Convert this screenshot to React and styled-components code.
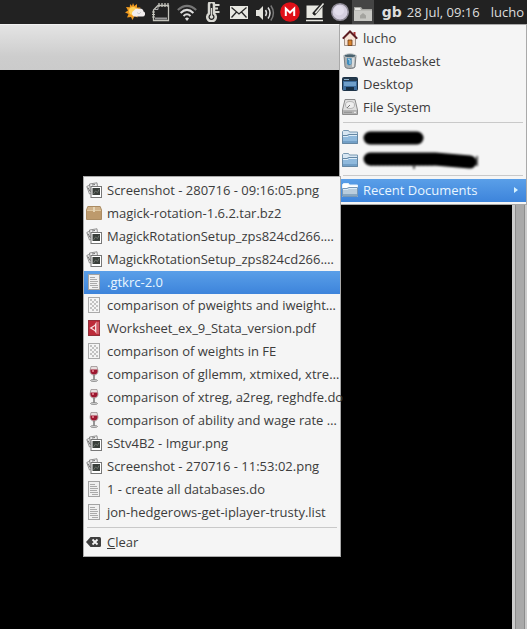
import styled, { createGlobalStyle } from "styled-components";

const theme = {
  font: `"Open Sans", "Noto Sans", sans-serif`,
  panel: "#222222",
  panelText: "#dedede",
  menu: "#f5f5f5",
  menuText: "#3c3c3c",
  border: "#a9a9a9",
  line: "#c9c9c9",
  select: "linear-gradient(#5a9fe8, #3d84db)",
};

const places = [
  { icon: <HomeIcon />, label: "lucho" },
  { icon: <TrashIcon />, label: "Wastebasket" },
  { icon: <DesktopIcon />, label: "Desktop" },
  { icon: <DriveIcon />, label: "File System" },
];

const documents = [
  { icon: <ImageIcon />, label: "Screenshot - 280716 - 09:16:05.png" },
  { icon: <PackageIcon />, label: "magick-rotation-1.6.2.tar.bz2" },
  { icon: <ImageIcon />, label: "MagickRotationSetup_zps824cd266.…" },
  { icon: <ImageIcon />, label: "MagickRotationSetup_zps824cd266.…" },
  { icon: <TextIcon />, label: ".gtkrc-2.0", active: true },
  { icon: <UnknownIcon />, label: "comparison of pweights and iweight…" },
  { icon: <PdfIcon />, label: "Worksheet_ex_9_Stata_version.pdf" },
  { icon: <UnknownIcon />, label: "comparison of weights in FE" },
  { icon: <WineIcon />, label: "comparison of gllemm, xtmixed, xtre…" },
  { icon: <WineIcon />, label: "comparison of xtreg, a2reg, reghdfe.do" },
  { icon: <WineIcon />, label: "comparison of ability and wage rate …" },
  { icon: <ImageIcon />, label: "sStv4B2 - Imgur.png" },
  { icon: <ImageIcon />, label: "Screenshot - 270716 - 11:53:02.png" },
  { icon: <TextIcon />, label: "1 - create all databases.do" },
  { icon: <TextIcon />, label: "jon-hedgerows-get-iplayer-trusty.list" },
];

const indicators = [
  { name: "Weather", icon: <WeatherIcon />, width: 26 },
  { name: "Notes", icon: <NotesIcon />, width: 26 },
  { name: "Network", icon: <WifiIcon />, width: 26 },
  { name: "Sensors", icon: <ThermometerIcon />, width: 26 },
  { name: "Mail", icon: <MailIcon />, width: 26 },
  { name: "Volume", icon: <VolumeIcon />, width: 26 },
  { name: "Mega", icon: <MegaIcon />, width: 24 },
  { name: "Editor", icon: <EditIcon />, width: 26 },
  { name: "Status", icon: <OrbIcon />, width: 24 },
];

export default function App() {
  return (
    <Desktop>
      <GlobalStyle />
      <Panel>
        {indicators.map((item) => (
          <Indicator key={item.name} aria-label={item.name} $width={item.width}>
            {item.icon}
          </Indicator>
        ))}
        <Indicator aria-label="Places" aria-expanded="true" $width={22} $open>
          <PanelFolderIcon />
        </Indicator>
        <Layout>gb</Layout>
        <Clock>28 Jul, 09:16</Clock>
        <User>lucho</User>
        <PlacesMenu />
      </Panel>
      <TitleBar />
      <Content>
        <ScrollTrack>
          <ScrollThumb />
        </ScrollTrack>
      </Content>
    </Desktop>
  );
}

function PlacesMenu() {
  return (
    <MainMenu>
      {places.map((p) => (
        <MenuItem key={p.label} icon={p.icon} label={p.label} />
      ))}
      <Separator />
      <li>
        <ItemButton aria-label="Bookmark 1">
          <FolderIcon />
          <ShortScribble />
        </ItemButton>
      </li>
      <li>
        <ItemButton aria-label="Bookmark 2">
          <FolderIcon />
          <LongScribble />
        </ItemButton>
      </li>
      <Separator />
      <SubmenuHolder>
        <ItemButton $active aria-expanded="true">
          <FolderIcon light />
          <Label>Recent Documents</Label>
          <Arrow viewBox="0 0 4 6">
            <path d="M0 0L4 3L0 6Z" fill="#d5f2ff" />
          </Arrow>
        </ItemButton>
        <RecentMenu>
          {documents.map((d, i) => (
            <MenuItem key={i} icon={d.icon} label={d.label} active={d.active} />
          ))}
          <Separator />
          <li>
            <ItemButton>
              <ClearIcon />
              <Label>
                <u>C</u>lear
              </Label>
            </ItemButton>
          </li>
        </RecentMenu>
      </SubmenuHolder>
    </MainMenu>
  );
}

function MenuItem({ icon, label, active }) {
  return (
    <li>
      <ItemButton $active={active}>
        {icon}
        <Label>{label}</Label>
      </ItemButton>
    </li>
  );
}

/* bookmarks with their names inked over */

function ShortScribble() {
  return (
    <Ink width="120" height="22" viewBox="0 0 120 22">
      <path d="M7 12H54" stroke="#000" strokeWidth="13" strokeLinecap="round" />
    </Ink>
  );
}

function LongScribble() {
  return (
    <Ink width="120" height="22" viewBox="0 0 120 22">
      <path d="M7 10H72L107 13" stroke="#000" strokeWidth="13" strokeLinecap="round" strokeLinejoin="round" fill="none" />
      <path d="M7 15H72" stroke="#000" strokeWidth="3" strokeDasharray="3 1" />
      <path d="M51 15v5M114 7v10" stroke="#222" strokeWidth="1.500" />
    </Ink>
  );
}

/* menu icons */

function HomeIcon() {
  return (
    <Icon viewBox="0 0 16 16">
      <path d="M11.500 2h2v4h-2z" fill="#a33" />
      <path d="M2.500 8L8 2.500L13.500 8V15.500H2.500Z" fill="#f6e3d6" stroke="#8b7b70" strokeWidth=".8" />
      <path d="M.8 8.600L8 1.400L15.200 8.600" fill="none" stroke="#5c1a20" strokeWidth="2" />
      <path d="M6 15.500V10h4v5.500Z" fill="#d98531" stroke="#6b3c1a" strokeWidth=".8" />
    </Icon>
  );
}

function TrashIcon() {
  return (
    <Icon viewBox="0 0 16 16">
      <path d="M2 2.500L3 14C4 16 12 16 13 14L14 2.500Z" fill="#a9afb2" stroke="#666b6e" strokeWidth=".8" />
      <path d="M10 5h2.500l-.6 9H10Z" fill="#d9dcdd" />
      <path d="M5 5h4.500v6L7 12.500L5 11Z" fill="#3e8cbd" />
      <path d="M6 6l2 1v4" stroke="#b7def0" fill="none" />
      <ellipse cx="8" cy="2.800" rx="6" ry="2" fill="#49616e" stroke="#c3c8ca" />
    </Icon>
  );
}

function DesktopIcon() {
  return (
    <Icon viewBox="0 0 16 16">
      <rect x=".5" y="1.500" width="15" height="13" rx="1" fill="#3d6c9c" stroke="#1e3347" />
      <path d="M1 2h14v3H1z" fill="#24394c" />
      <path d="M2 6h12v4H2z" fill="#6f9fca" />
      <path d="M4 11h8v3H4z" fill="#172f45" />
      <path d="M2 3.500h5" stroke="#8db2cf" />
    </Icon>
  );
}

function DriveIcon() {
  return (
    <Icon viewBox="0 0 16 16">
      <path d="M3 .5h10L15.500 11v4.500H.5V11Z" fill="#dedede" stroke="#8c8c8c" />
      <path d="M1 11h14v4H1z" fill="#b4b4b4" />
      <ellipse cx="8" cy="6" rx="4.500" ry="3.500" fill="#eee" stroke="#aaa" strokeWidth=".8" />
      <path d="M5 9l3-3" stroke="#777" />
      <path d="M2.500 13.300h7" stroke="#6c6c6c" strokeDasharray="1 1" />
      <path d="M12 13.300h2" stroke="#f5f5f5" />
    </Icon>
  );
}

function FolderIcon({ light }) {
  return (
    <Icon viewBox="0 0 16 16">
      <path d="M.5 14.500V2.500L1.500 1.500H6.500L7.500 3H15.500V14.500Z" fill={light ? "#fff" : "#d7e6f2"} stroke={light ? "#e4f1fb" : "#7898b1"} />
      <path d="M.5 14.500V6.500H5L6.500 5.500H15.500V14.500Z" fill={light ? "#b9cddd" : "#8fb9dc"} stroke={light ? "#7798b7" : "#6587a3"} />
      <path d="M1 7.500h5l1-1h8" stroke="#dcecf8" fill="none" />
      <path d="M1 12h14v2H1z" fill={light ? "#87a7c2" : "#729fc6"} />
    </Icon>
  );
}

function ImageIcon() {
  return (
    <Icon viewBox="0 0 16 16">
      <path d="M.8 4.500L5 2.500L7 11L3.500 12Z" fill="#f6f6f6" stroke="#777" strokeWidth=".8" />
      <path d="M3.500 2L11 .8L12 9L4.500 10Z" fill="#eee" stroke="#777" strokeWidth=".8" />
      <path d="M2 5.500l2 4M6 3l3-.5" stroke="#777" />
      <rect x="5" y="4.500" width="10.500" height="11" fill="#fff" stroke="#777" />
      <rect x="6.500" y="6" width="7.500" height="7" fill="#3a3f3b" />
      <path d="M7.500 12l2-3l2 1.500l1.500-3" stroke="#6a716b" fill="none" />
    </Icon>
  );
}

function PackageIcon() {
  return (
    <Icon viewBox="0 0 16 16">
      <path d="M1.800 1.500H14.200L15.500 5V14.500H.5V5Z" fill="#d0b28a" stroke="#ab8c62" />
      <path d="M1 6h14v8H1z" fill="#bd9a6c" />
      <path d="M1 5.500h14" stroke="#dec69f" />
      <path d="M7 2h2v5h-2z" fill="#e4d3b3" />
    </Icon>
  );
}

function TextIcon() {
  return (
    <Icon viewBox="0 0 16 16">
      <rect x="2.500" y=".5" width="11" height="15" fill="#f0f0f0" stroke="#a3a3a3" />
      <path d="M4 3.500h5M4 5.500h7M4 7.500h8M4 9.500h7M4 11.500h8M6 13.500h6" stroke="#aaa" />
    </Icon>
  );
}

function UnknownIcon() {
  return (
    <Icon viewBox="0 0 16 16">
      <rect x="2.500" y=".5" width="11" height="15" fill="#f5f5f5" stroke="#aaa" />
      <path d="M4 3h8M4 7h8M4 11h8" stroke="#c2c2c2" strokeWidth="2" strokeDasharray="2 2" />
      <path d="M6 5h6M6 9h6M6 13h6" stroke="#c2c2c2" strokeWidth="2" strokeDasharray="2 2" />
    </Icon>
  );
}

function PdfIcon() {
  return (
    <Icon viewBox="0 0 16 16">
      <rect x="2.500" y=".5" width="11" height="15" fill="#bd2b3a" stroke="#91303a" />
      <path d="M10.500 1.500V14L8.500 11L3.500 8L8.500 5Z" fill="#f7dede" />
      <path d="M9 6v4L6 8Z" fill="#bd2b3a" />
      <path d="M12 2v12" stroke="#e98790" />
    </Icon>
  );
}

function WineIcon() {
  return (
    <Icon viewBox="0 0 16 16">
      <path d="M5 .5h6L12 5C12 8 10 9 8 9S4 8 4 5Z" fill="#e7dede" stroke="#9b9292" strokeWidth=".8" />
      <path d="M4.500 3.500h7L11.600 5C11.600 7.500 10 8.500 8 8.500S4.400 7.500 4.400 5Z" fill="#9c1730" />
      <path d="M6 4h2v2H6z" fill="#d9707f" />
      <path d="M8 9v5" stroke="#777" strokeWidth="1.500" />
      <ellipse cx="8" cy="14.500" rx="3.500" ry="1" fill="#d5d5d5" stroke="#777" strokeWidth=".7" />
    </Icon>
  );
}

function ClearIcon() {
  return (
    <Icon viewBox="0 0 16 16">
      <path d="M0 8L4.500 3H13.500Q15 3 15 4.500V11.500Q15 13 13.500 13H4.500Z" fill="#3f3f3f" />
      <path d="M6.500 5.500L11.500 10.500M11.500 5.500L6.500 10.500" stroke="#f5f5f5" strokeWidth="1.800" />
    </Icon>
  );
}

/* panel icons */

function WeatherIcon() {
  return (
    <PanelIcon viewBox="0 0 20 20">
      <path d="M8 1l1.300 3l2.700-2l0 3.500l3.500 0l-2 3l2 2l-3 1l0 4l-3-1.500L7.500 18L6 15l-4 .5L3.500 12L0 10.500L3 8.500L1 5l3.800.2L5 2l2 2Z" fill="#f09b20" />
      <circle cx="8" cy="9" r="4" fill="#ffd15a" />
      <path d="M9 14.500a3.200 3.200 0 0 1 0-6a3.500 3.500 0 0 1 5-1.500a3 3 0 0 1 4.500 2.500a2.600 2.600 0 0 1-1 5Z" fill="#f2eeee" />
      <path d="M12 10.500l2 1.500l2-2" fill="none" stroke="#ccc" />
    </PanelIcon>
  );
}

function NotesIcon() {
  return (
    <PanelIcon viewBox="0 0 20 20">
      <path d="M7 3.500H17.500V18.500H2.500V8Z" fill="none" stroke="#c4c4bc" strokeWidth="1.300" />
      <path d="M3 7.500h4V3" fill="none" stroke="#aaa" />
      <path d="M8 1v4M11 1v4M14 1v4M17 1v4" stroke="#c4c4bc" strokeWidth="1.300" />
      <path d="M1 10h3M1 12.500h3M1 15h3" stroke="#c4c4bc" />
      <path d="M4 16.500h12" stroke="#999" strokeWidth="2" />
    </PanelIcon>
  );
}

function WifiIcon() {
  return (
    <PanelIcon viewBox="0 0 20 20">
      <path d="M.8 8Q10-.3 19.200 8" fill="none" stroke="#777" strokeWidth="2" />
      <path d="M3.600 11Q10 4.800 16.400 11" fill="none" stroke="#ddd" strokeWidth="2" />
      <path d="M6.500 14Q10 10.500 13.500 14" fill="none" stroke="#ddd" strokeWidth="2" />
      <path d="M8 16.500Q10 14.500 12 16.500L10 19Z" fill="#ddd" />
    </PanelIcon>
  );
}

function ThermometerIcon() {
  return (
    <PanelIcon viewBox="0 0 20 20">
      <path d="M6 2.500a2.500 2.500 0 0 1 5 0V11.500a4.300 4.300 0 1 1-5 0Z" fill="#222" stroke="#d8d8d2" strokeWidth="2.500" />
      <path d="M8.500 6v9" stroke="#d8d8d2" strokeWidth="1.300" />
      <circle cx="8.500" cy="15" r="1.800" fill="#d8d8d2" />
      <path d="M11 3h5.500M11 6.500h4M11 10h5.500" stroke="#d8d8d2" strokeWidth="2" />
    </PanelIcon>
  );
}

function MailIcon() {
  return (
    <PanelIcon viewBox="0 0 20 20">
      <path d="M1 4h18v13H1z" fill="#e8e8e2" />
      <path d="M2.500 5.500L10 12L17.500 5.500M2.500 15.500L7.500 10M17.500 15.500L12.500 10" fill="none" stroke="#292929" strokeWidth="1.300" />
    </PanelIcon>
  );
}

function VolumeIcon() {
  return (
    <PanelIcon viewBox="0 0 20 20">
      <path d="M1 8h3l4-4v14l-4-4H1Z" fill="#e2e2dc" />
      <path d="M10.500 8Q12.500 11 10.500 14" fill="none" stroke="#ddd" strokeWidth="1.500" />
      <path d="M13 5.500Q17 11 13 16.500" fill="none" stroke="#ddd" strokeWidth="1.500" />
      <path d="M15.800 3.500Q21 11 15.800 18.500" fill="none" stroke="#777" strokeWidth="1.500" />
    </PanelIcon>
  );
}

function MegaIcon() {
  return (
    <PanelIcon viewBox="0 0 20 20">
      <circle cx="10" cy="10" r="9.800" fill="#e01018" />
      <path d="M5.800 14V6.500L10 10.500L14.200 6.500V14" fill="none" stroke="#fff" strokeWidth="2" />
    </PanelIcon>
  );
}

function EditIcon() {
  return (
    <PanelIcon viewBox="0 0 20 20">
      <path d="M1.500 3.500h16v12.500h-16z" fill="#e8e8e2" />
      <path d="M1 18.500h17" stroke="#e8e8e2" strokeWidth="1.500" />
      <path d="M8.500 12.500L18.500 1" stroke="#222" strokeWidth="3.500" />
      <path d="M10 11.500L18.500 1.500" stroke="#e8e8e2" strokeWidth="1.500" />
      <path d="M8 13l1-3l2 1.500Z" fill="#222" />
    </PanelIcon>
  );
}

function OrbIcon() {
  return (
    <PanelIcon viewBox="0 0 20 20">
      <circle cx="10" cy="10" r="8.300" fill="#d5cfdf" stroke="#908c98" strokeWidth="1.500" />
      <circle cx="9" cy="8.500" r="5" fill="#e2ddeb" />
    </PanelIcon>
  );
}

function PanelFolderIcon() {
  return (
    <PanelIcon viewBox="0 0 20 20">
      <path d="M1 5h7l1.500 2H19v12H1Z" fill="#a7a7a3" />
      <path d="M2 6h5l1 2H2Z" fill="#e8e8e5" />
      <path d="M1 8.500h18V19H1z" fill="#c8c8c4" />
      <path d="M7 13.500L10 11l3 2.500v3h-6Z" fill="#a3a39f" />
    </PanelIcon>
  );
}

const GlobalStyle = createGlobalStyle`
  * {
    box-sizing: border-box;
  }

  body {
    margin: 0;
    background: #000;
    font-family: ${theme.font};
    font-size: 13px;
  }

  button {
    border: 0;
    background: none;
    font: inherit;
    color: inherit;
  }
`;

const Desktop = styled.div`
  display: flex;
  flex-direction: column;
  min-height: 100vh;
`;

const Panel = styled.header`
  position: relative;
  display: flex;
  justify-content: flex-end;
  align-items: center;
  height: 24px;
  padding: 0 3px 1px 0;
  background: ${theme.panel};
  color: ${theme.panelText};
  white-space: nowrap;
`;

const Indicator = styled.button`
  display: flex;
  flex: none;
  align-items: center;
  justify-content: center;
  width: ${({ $width }) => $width}px;
  height: 24px;
  padding: 0;
  background: ${({ $open }) => ($open ? "#454545" : "none")};
`;

const PanelIcon = styled.svg`
  flex: none;
  width: 20px;
  height: 20px;
`;

const Layout = styled.span`
  width: 20px;
  margin-left: 8px;
  font-family: "DejaVu Sans", sans-serif;
  font-size: 14px;
  font-weight: bold;
`;

const Clock = styled.time`
  margin-left: 5px;
`;

const User = styled.span`
  margin-left: 11px;
`;

const TitleBar = styled.div`
  height: 46px;
  border-top: 1px solid #f2f2f2;
  background: linear-gradient(#e4e4e4, #cdcdcd 70%, #cbcbcb);
`;

const Content = styled.main`
  display: flex;
  flex: 1;
  justify-content: flex-end;
  background: #000;
`;

const ScrollTrack = styled.div`
  display: flex;
  width: 15px;
  padding: 0 2px 0 3px;
  background: #cbcbcb;
`;

const ScrollThumb = styled.div`
  flex: 1;
  border: solid #8d8d8d;
  border-width: 0 1px;
  background: #a9a9a9;
`;

const Menu = styled.ul`
  position: absolute;
  z-index: 1;
  margin: 0;
  padding: 2px 0;
  border: 1px solid ${theme.border};
  background: ${theme.menu};
  color: ${theme.menuText};
  list-style: none;
`;

const MainMenu = styled(Menu)`
  top: 100%;
  right: 0;
  width: 188px;
`;

const RecentMenu = styled(Menu)`
  top: -3px;
  right: calc(100% - 1px);
  width: 258px;
`;

const SubmenuHolder = styled.li`
  position: relative;
`;

const ItemButton = styled.button`
  display: flex;
  align-items: center;
  gap: 5px;
  width: 100%;
  height: 23px;
  padding: 0 8px 1px 2px;
  text-align: left;
  white-space: nowrap;
  ${({ $active }) => $active && `background: ${theme.select}; color: #e9f6ff;`}
`;

const Label = styled.span`
  flex: 1;
`;

const Icon = styled.svg`
  flex: none;
  width: 16px;
  height: 16px;
`;

const Arrow = styled.svg`
  flex: none;
  width: 4px;
  height: 6px;
`;

const Ink = styled.svg`
  flex: none;
  filter: blur(1px);
`;

const Separator = styled.li.attrs({ role: "separator" })`
  height: 1px;
  margin: 3px;
  background: ${theme.line};
`;
